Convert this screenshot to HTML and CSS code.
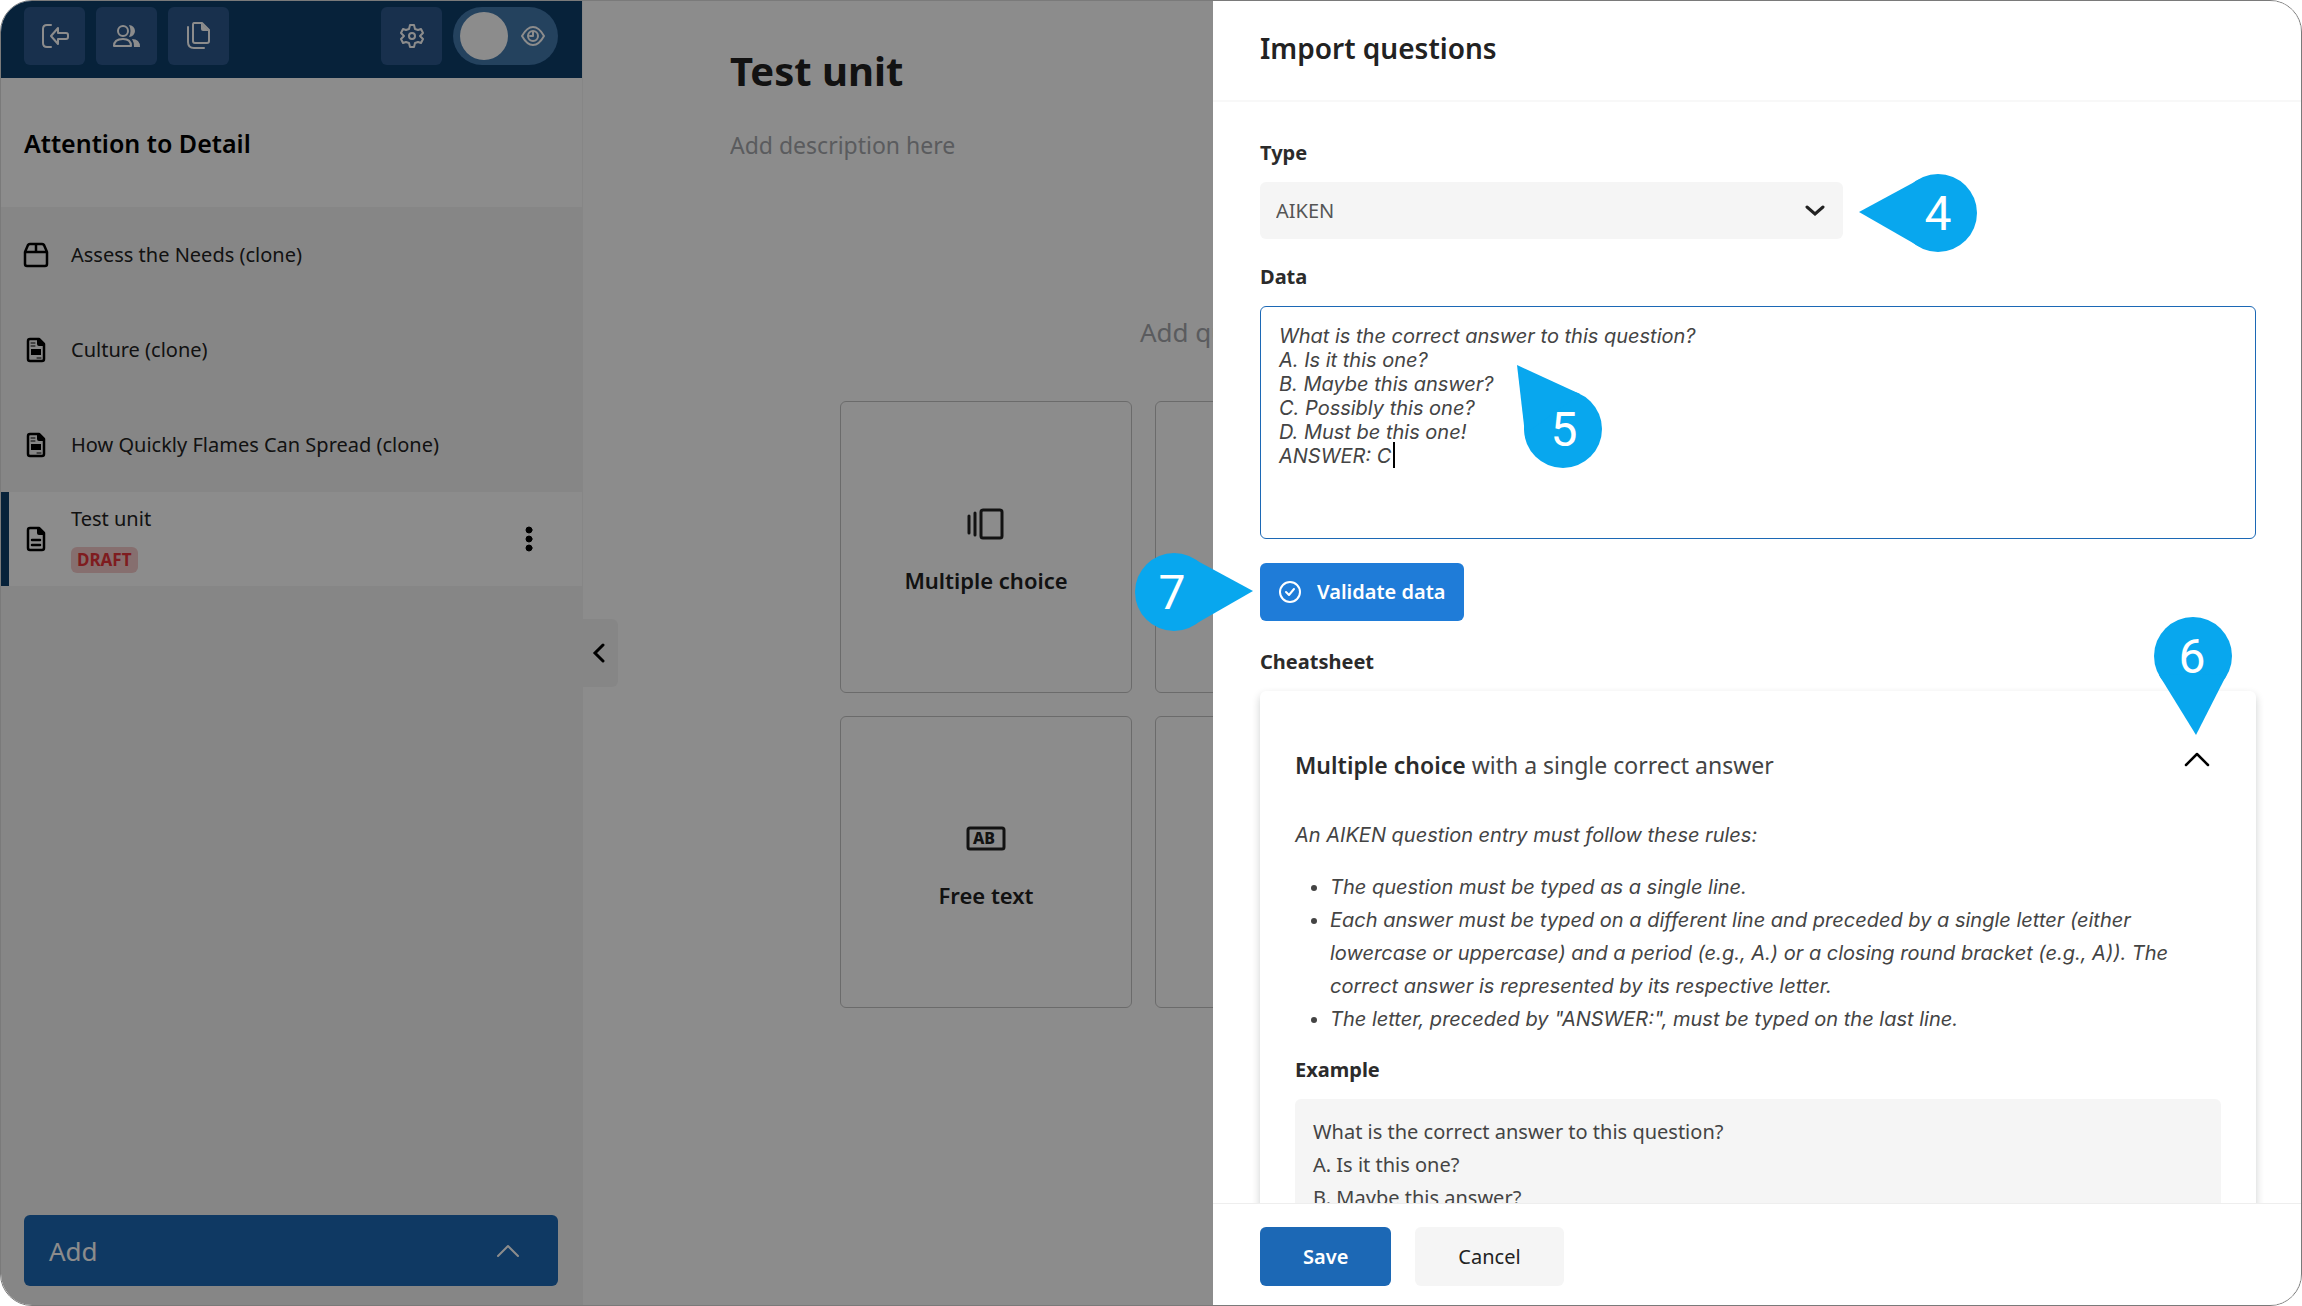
FILE: index.html
```
<!DOCTYPE html>
<html lang="en">
<head>
    <meta charset="UTF-8">
    <meta name="viewport" content="width=device-width, initial-scale=1.0">
    <title>Import questions</title>
    <link rel="stylesheet" href="styles.css">
</head>
<body>
    <div class="app">
        <aside class="sidebar">
            <div class="topbar">
                <button class="tool" aria-label="Exit">
                    <svg width="30" height="30" viewBox="0 0 30 30"><path d="M11 4H7Q3 4 3 8V22Q3 26 7 26H11"/><path d="M11 15L18 7V12H26Q28 12 28 14V16Q28 18 26 18H18V23Z"/></svg>
                </button>
                <button class="tool" aria-label="Users">
                    <svg width="30" height="30" viewBox="0 0 30 30"><circle cx="11" cy="10" r="5"/><path d="M2 25Q2 18 11 18Q19 18 19 25Z"/><path class="solid" d="M17 4A6 6 0 1 1 17 16Q20 10 17 4Z"/><path class="solid" d="M20 18Q28 18 28 26H22Q22 21 20 18Z"/></svg>
                </button>
                <button class="tool" aria-label="Files">
                    <svg width="30" height="30" viewBox="0 0 30 30"><path d="M10 2H18L25 9V20Q25 22 23 22H11Q9 22 9 20V4Q9 2 10 2Z"/><path class="solid" d="M17 2L25 10H19Q17 10 17 8Z"/><path d="M4 6V21Q4 27 10 27H20"/></svg>
                </button>
                <button class="tool settings" aria-label="Settings">
                    <svg width="30" height="30" viewBox="0 0 30 30"><path d="M13 4H17L18 8L21 9L24 8L26 12L23 15L26 18L24 22L21 21L18 22L17 26H13L12 22L9 21L6 22L4 18L7 15L4 12L6 8L9 9L12 8Z"/><circle cx="15" cy="15" r="3"/></svg>
                </button>
                <label class="switch">
                    <input type="checkbox" aria-label="Preview">
                    <svg width="26" height="26" viewBox="0 0 26 26"><path d="M2 13Q7 4 13 4T24 13Q19 22 13 22T2 13Z"/><circle cx="13" cy="13" r="5"/><path d="M13 9V13H10"/></svg>
                </label>
            </div>
            <h2 class="course-title">Attention to Detail</h2>
            <ul class="units">
                <li class="unit">
                    <svg width="26" height="26" viewBox="0 0 26 26"><path d="M2 10L5 3Q6 2 7 2H19Q20 2 21 3L24 10V22Q24 24 22 24H4Q2 24 2 22ZM2 10H24M13 2V10"/></svg>
                    <a href="#">Assess the Needs (clone)</a>
                </li>
                <li class="unit">
                    <svg width="26" height="26" viewBox="0 0 26 26"><path d="M7 2H16L21 7V22Q21 24 19 24H7Q5 24 5 22V4Q5 2 7 2Z"/><path class="solid" d="M14 1L22 9H16Q14 9 14 7ZM8 12H18V18H8Z"/><path class="thin" d="M8 6H12M8 9H12M14 21H18"/></svg>
                    <a href="#">Culture (clone)</a>
                </li>
                <li class="unit">
                    <svg width="26" height="26" viewBox="0 0 26 26"><path d="M7 2H16L21 7V22Q21 24 19 24H7Q5 24 5 22V4Q5 2 7 2Z"/><path class="solid" d="M14 1L22 9H16Q14 9 14 7ZM8 12H18V18H8Z"/><path class="thin" d="M8 6H12M8 9H12M14 21H18"/></svg>
                    <a href="#">How Quickly Flames Can Spread (clone)</a>
                </li>
                <li class="unit active">
                    <svg width="26" height="26" viewBox="0 0 26 26"><path d="M7 2H16L21 7V22Q21 24 19 24H7Q5 24 5 22V4Q5 2 7 2Z"/><path class="solid" d="M14 1L22 9H16Q14 9 14 7Z"/><path d="M9 14H17M9 19H17"/></svg>
                    <div class="unit-info">
                        <a href="#">Test unit</a>
                        <span class="draft">DRAFT</span>
                    </div>
                    <button class="more" aria-label="More options">
                        <svg width="8" height="26" viewBox="0 0 8 26"><circle cx="4" cy="4" r="3"/><circle cx="4" cy="13" r="3"/><circle cx="4" cy="22" r="3"/></svg>
                    </button>
                </li>
            </ul>
            <button class="add">
                Add
                <svg width="24" height="16" viewBox="0 0 24 16"><path d="M2 13L12 3L22 13"/></svg>
            </button>
        </aside>

        <main class="main">
            <button class="collapse" aria-label="Collapse sidebar">
                <svg width="16" height="20" viewBox="0 0 16 20"><path d="M12 2L4 10L12 18"/></svg>
            </button>
            <h1>Test unit</h1>
            <input class="description" type="text" placeholder="Add description here" aria-label="Description">
            <div class="builder">
                <p class="builder-title">Add questions</p>
                <div class="types">
                    <button class="type-card">
                        <svg width="40" height="40" viewBox="0 0 40 40"><rect x="15" y="6" width="21" height="28" rx="2"/><path d="M9 9V31M3 12V29"/></svg>
                        Multiple choice
                    </button>
                    <button class="type-card" aria-label="Question type"></button>
                    <button class="type-card">
                        <svg width="40" height="40" viewBox="0 0 40 40"><rect x="2" y="9" width="36" height="21" rx="2"/><text x="7" y="25">AB</text></svg>
                        Free text
                    </button>
                    <button class="type-card" aria-label="Question type"></button>
                </div>
            </div>
        </main>

        <div class="backdrop"></div>

        <section class="drawer">
            <header class="drawer-header">
                <h2>Import questions</h2>
            </header>
            <div class="drawer-body">
                <div class="field">
                    <label for="type">Type</label>
                    <div class="select">
                        <select id="type">
                            <option>AIKEN</option>
                        </select>
                        <svg width="20" height="14" viewBox="0 0 20 14"><path d="M2 3L10 10L18 3"/></svg>
                    </div>
                </div>
                <div class="field">
                    <label for="data">Data</label>
                    <div class="data">
                        <textarea id="data" spellcheck="false">What is the correct answer to this question?
A. Is it this one?
B. Maybe this answer?
C. Possibly this one?
D. Must be this one!
ANSWER: C</textarea>
                        <span class="caret"></span>
                    </div>
                </div>
                <button class="validate">
                    <svg width="24" height="24" viewBox="0 0 24 24"><circle cx="12" cy="12" r="10"/><path d="M8 12L11 15L16 9"/></svg>
                    Validate data
                </button>
                <h3>Cheatsheet</h3>
                <div class="cheatsheet">
                    <div class="cheatsheet-head">
                        <p><b>Multiple choice</b> with a single correct answer</p>
                        <button class="fold" aria-label="Collapse">
                            <svg width="26" height="16" viewBox="0 0 26 16"><path d="M2 14L13 3L24 14"/></svg>
                        </button>
                    </div>
                    <div class="rules">
                        <p>An AIKEN question entry must follow these rules:</p>
                        <ul>
                            <li>The question must be typed as a single line.</li>
                            <li>Each answer must be typed on a different line and preceded by a single letter (either lowercase or uppercase) and a period (e.g., A.) or a closing round bracket (e.g., A)). The correct answer is represented by its respective letter.</li>
                            <li>The letter, preceded by "ANSWER:", must be typed on the last line.</li>
                        </ul>
                    </div>
                    <h4>Example</h4>
                    <div class="example">
                        What is the correct answer to this question?<br>
                        A. Is it this one?<br>
                        B. Maybe this answer?
                    </div>
                </div>
            </div>
            <footer class="drawer-footer">
                <button class="save">Save</button>
                <button class="cancel">Cancel</button>
            </footer>

            <!-- numbered step markers -->
            <svg class="step step-4" width="118" height="78" viewBox="0 0 118 78"><circle cx="79" cy="39" r="39"/><path d="M0 38L61 5V73Z"/><text x="79" y="56">4</text></svg>
            <svg class="step step-5" width="85" height="103" viewBox="0 0 85 103"><circle cx="46" cy="64" r="39"/><path d="M0 0L63 29L8 69Z"/><text x="47" y="81">5</text></svg>
            <svg class="step step-6" width="78" height="118" viewBox="0 0 78 118"><circle cx="39" cy="39" r="39"/><path d="M42 118L73 57L5 58Z"/><text x="38" y="56">6</text></svg>
            <svg class="step step-7" width="118" height="78" viewBox="0 0 118 78"><circle cx="39" cy="39" r="39"/><path d="M118 38L57 5V73Z"/><text x="37" y="56">7</text></svg>
        </section>
    </div>
</body>
</html>
```
FILE: styles.css
```
* {
    box-sizing: border-box;
}
body {
    margin: 0;
    background: white;
    color: #222;
    font-family: "Noto Sans", sans-serif;
    font-size: 20px;
    line-height: 28px;
}
h1, h2, h3, h4, p, ul {
    margin: 0;
    padding: 0;
}
button, input, select, textarea {
    font: inherit;
    color: inherit;
    border: none;
    margin: 0;
    padding: 0;
    background: none;
    outline: none;
}
button {
    cursor: pointer;
}
a {
    color: inherit;
    text-decoration: none;
}
svg {
    display: block;
    flex: none;
    fill: none;
    stroke: currentColor;
    stroke-width: 2;
    stroke-linecap: round;
    stroke-linejoin: round;
}
svg .solid {
    fill: currentColor;
    stroke: none;
}
.app {
    position: relative;
    display: flex;
    height: 100vh;
    border: 1px solid #7a7a7a;
    border-radius: 32px;
    overflow: hidden;
}

/* sidebar */
.sidebar {
    display: flex;
    flex-direction: column;
    flex: none;
    width: 582px;
    background: #f5f5f5;
    border-right: 1px solid #f5f5f5;
}
.topbar {
    display: flex;
    gap: 11px;
    padding: 6px 24px 13px 23px;
    background: #0d3e6b;
    color: white;
}
.tool {
    display: flex;
    align-items: center;
    justify-content: center;
    width: 61px;
    height: 58px;
    border-radius: 6px;
    background: #2c588d;
}
.settings {
    margin-left: auto;
}
.switch {
    display: flex;
    align-items: center;
    gap: 12px;
    width: 105px;
    height: 58px;
    padding-left: 7px;
    border-radius: 29px;
    background: #4278ac;
}
.switch input {
    appearance: none;
    width: 48px;
    height: 48px;
    border-radius: 50%;
    background: white;
}
.course-title {
    padding: 47px 23px 46px;
    font-size: 25px;
    line-height: 36px;
    font-weight: 600;
    color: black;
    background: white;
}
.units {
    list-style: none;
    flex: 1;
}
.unit {
    display: flex;
    align-items: center;
    gap: 22px;
    height: 95px;
    padding-left: 22px;
}
.unit svg {
    color: black;
    stroke-width: 2.5;
}
.unit .thin {
    stroke-width: 1;
}
.unit.active {
    height: 94px;
    padding-left: 14px;
    border-left: 8px solid #0d3e6b;
    background: white;
}
.unit-info {
    display: flex;
    flex-direction: column;
    align-items: flex-start;
    gap: 14px;
    flex: 1;
}
.draft {
    padding: 0 6px;
    border-radius: 6px;
    background: #f5caca;
    color: #e8343a;
    font-size: 17px;
    line-height: 26px;
    font-weight: 700;
}
.more {
    margin-right: 49px;
}
.more svg {
    fill: black;
    stroke-width: 1;
}
.add {
    display: flex;
    align-items: center;
    justify-content: space-between;
    margin: 0 24px 19px 23px;
    padding: 0 38px 0 25px;
    height: 71px;
    border-radius: 6px;
    background: #1c68b5;
    color: white;
    font-size: 26px;
}

/* page under the drawer */
.main {
    position: relative;
    flex: 1;
    min-width: 0;
    padding: 42px 0 0 147px;
    background: white;
}
.collapse {
    position: absolute;
    left: 0;
    top: calc(50% - 34px);
    display: flex;
    align-items: center;
    justify-content: center;
    width: 35px;
    height: 68px;
    padding-right: 3px;
    border-radius: 0 6px 6px 0;
    background: #f5f5f5;
    color: black;
}
.collapse svg {
    stroke-width: 3;
    stroke-linejoin: miter;
}
h1 {
    font-size: 40px;
    line-height: 56px;
    font-weight: 700;
}
.description {
    display: block;
    width: 100%;
    margin-top: 30px;
    font-size: 23px;
    line-height: 32px;
}
.description::placeholder {
    color: #a5a7ab;
    opacity: 1;
}
.builder {
    margin: 153px 0 0 110px;
}
.builder-title {
    padding-left: 300px;
    font-size: 26px;
    line-height: 36px;
    color: #a5a7ab;
}
.types {
    display: grid;
    grid-template-columns: repeat(2, 292px);
    grid-auto-rows: 292px;
    gap: 23px;
    margin-top: 51px;
}
.type-card {
    display: flex;
    flex-direction: column;
    align-items: center;
    justify-content: center;
    gap: 20px;
    padding-top: 6px;
    border: 1px solid #c4c4c4;
    border-radius: 6px;
    font-size: 22px;
    line-height: 32px;
    font-weight: 600;
}
.type-card svg {
    stroke-width: 3;
}
.type-card text {
    fill: currentColor;
    stroke: none;
    font-size: 16px;
    font-weight: 800;
}
.backdrop {
    position: absolute;
    inset: 0;
    background: rgba(0, 0, 0, 0.45);
}

/* drawer */
.drawer {
    position: absolute;
    top: 0;
    right: 0;
    bottom: 0;
    display: flex;
    flex-direction: column;
    width: 1088px;
    max-width: 100%;
    background: white;
}
.drawer-header {
    padding: 27px 47px 32px;
    border-bottom: 2px solid #f8f8f8;
}
.drawer-header h2 {
    font-size: 28px;
    line-height: 40px;
    font-weight: 600;
}
.drawer-body {
    flex: 1;
    min-height: 0;
    padding: 37px 45px 0 47px;
    overflow: hidden;
}
.field {
    margin-bottom: 24px;
}
.field label, h3, h4 {
    display: block;
    margin-bottom: 15px;
    font-size: 20px;
    line-height: 28px;
    font-weight: 700;
    color: #2b2b2b;
}
.select {
    position: relative;
    width: 583px;
}
.select select {
    appearance: none;
    display: block;
    width: 100%;
    height: 57px;
    padding: 0 16px;
    border-radius: 6px;
    background: #f5f5f5;
    color: #555;
}
.select svg {
    position: absolute;
    right: 18px;
    top: 22px;
    stroke-width: 3;
    stroke-linejoin: miter;
    pointer-events: none;
}
.data {
    position: relative;
}
.data textarea {
    display: block;
    width: 100%;
    height: 233px;
    padding: 17px 18px;
    border: 1px solid #1c68b5;
    border-radius: 6px;
    resize: none;
    font-family: Inter, sans-serif;
    font-style: italic;
    line-height: 24px;
    color: #444;
}
.caret {
    position: absolute;
    left: 133px;
    top: 136px;
    width: 2px;
    height: 26px;
    background: black;
}
.validate {
    display: flex;
    align-items: center;
    gap: 15px;
    height: 58px;
    margin-bottom: 27px;
    padding: 0 18px;
    border-radius: 6px;
    background: #1f7cd8;
    color: white;
    font-weight: 600;
}
.cheatsheet {
    padding: 58px 35px 35px;
    border-radius: 6px;
    box-shadow: 0 4px 8px rgba(0, 20, 20, 0.2);
    color: #444;
}
.cheatsheet-head {
    display: flex;
    align-items: center;
    justify-content: space-between;
    font-size: 23px;
    line-height: 32px;
}
.cheatsheet-head b {
    font-weight: 600;
    color: #2b2b2b;
}
.fold {
    margin-right: 11px;
    padding-bottom: 12px;
    color: black;
}
.fold svg {
    stroke-width: 2.5;
}
.rules {
    margin: 38px 0 20px;
    font-family: Inter, sans-serif;
    font-style: italic;
    line-height: 33px;
}
.rules ul {
    margin-top: 19px;
    padding-left: 35px;
    padding-right: 24px;
}
.example {
    padding: 16px 18px;
    border-radius: 6px;
    background: #f5f5f5;
    line-height: 33px;
}
.drawer-footer {
    display: flex;
    gap: 24px;
    padding: 23px 47px 19px;
    border-top: 1px solid #eee;
}
.drawer-footer button {
    height: 59px;
    padding: 0 43px;
    border-radius: 6px;
}
.drawer-footer .save {
    background: #1c68b5;
    color: white;
    font-weight: 600;
}
.drawer-footer .cancel {
    background: #f5f5f5;
}

/* step markers point at the controls, over everything else */
.step {
    position: absolute;
    fill: #08a7ee;
    stroke: none;
}
.step text {
    fill: white;
    font-family: Roboto, sans-serif;
    font-size: 48px;
    text-anchor: middle;
}
.step-4 {
    left: 646px;
    top: 173px;
}
.step-5 {
    left: 304px;
    top: 364px;
}
.step-6 {
    right: 69px;
    top: 616px;
}
.step-7 {
    left: -78px;
    top: 552px;
}
```
